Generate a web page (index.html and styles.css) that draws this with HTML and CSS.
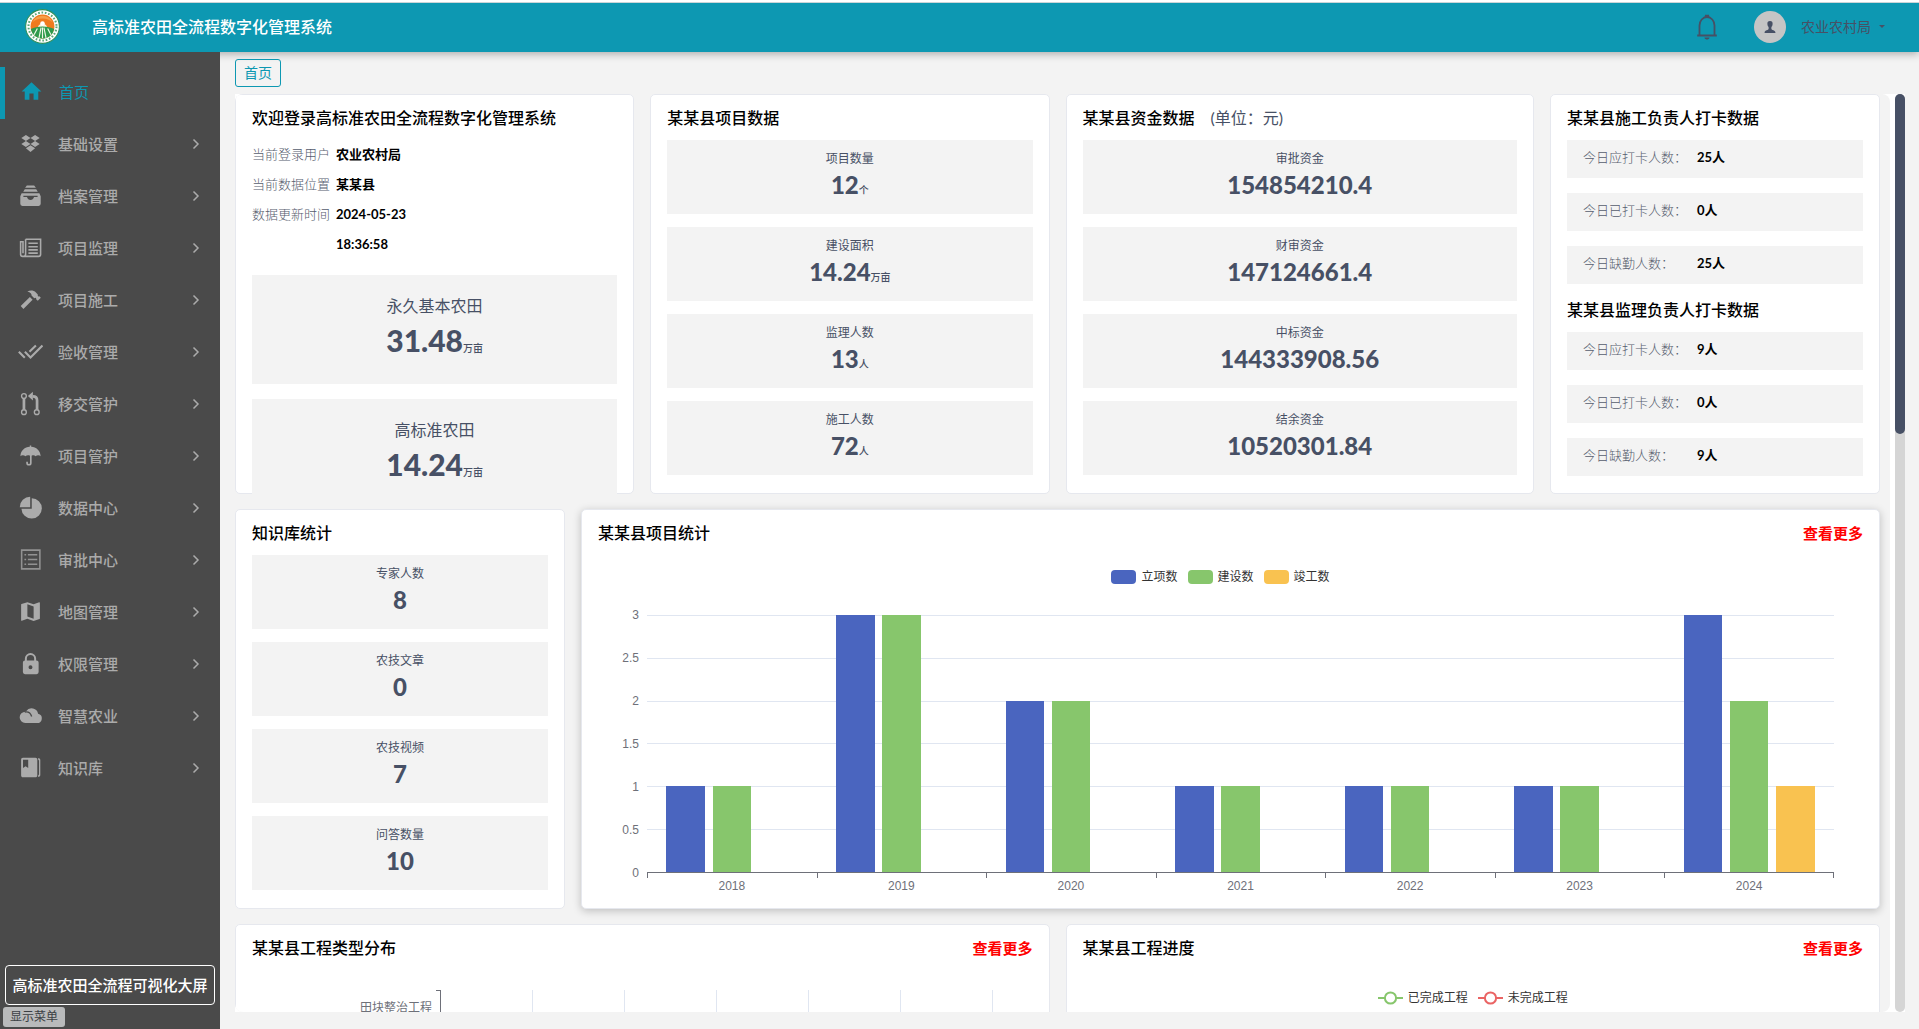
FILE: index.html
```
<!DOCTYPE html>
<html lang="zh-CN">
<head>
<meta charset="utf-8">
<title>高标准农田全流程数字化管理系统</title>
<link rel="stylesheet" href="styles.css">
</head>
<body>
<header class="topbar">
  <svg class="logo" viewBox="0 0 34 34" aria-hidden="true">
    <circle cx="17" cy="17" r="16.4" fill="#fff" stroke="#2f8f5a" stroke-width="1"/>
    <circle cx="17" cy="17" r="13.6" fill="none" stroke="#5aa777" stroke-width="2" stroke-dasharray="1.6 1.7"/>
    <circle cx="17" cy="17" r="11.6" fill="#f07a1d"/>
    <path d="M7 13a11 11 0 0 1 20 0c-5-5-15-5-20 0z" fill="#f6a04a"/>
    <path d="M12.5 18a4.6 4.6 0 0 1 9 0z" fill="#fff3dc"/>
    <circle cx="17" cy="14" r="2.2" fill="#fff"/>
    <path d="M5.6 19.5c6-3.4 16.800-3.400 22.800 0A11.600 11.600 0 0 1 5.600 19.500z" fill="#2f9a4c"/>
    <path d="M15.600 18.200 13.600 28M18.400 18.200 20.400 28M12 19 8.800 25M22 19l3.200 6M17 18v10.500" stroke="#f2f8e8" stroke-width="1.100"/>
  </svg>
  <h1 class="system-name">高标准农田全流程数字化管理系统</h1>
  <button class="icon-button" type="button" aria-label="通知">
    <svg width="24" height="28" viewBox="0 0 24 28" fill="none" stroke="#475065" stroke-width="1.800">
      <path d="M2.200 22.500h19.600M4.500 22.200V12.500a7.500 8.500 0 0 1 15 0v9.700"/>
      <path d="M10.500 4.200 10.800 2.600h2.400l.3 1.600z" fill="#475065"/>
      <path d="M9.800 25h4.400l-1.200 1h-2z" fill="#475065" stroke-width="1"/>
    </svg>
  </button>
  <button class="user" type="button">
    <span class="avatar">
      <svg width="12" height="12" viewBox="0 0 12 12"><path d="M6 0C7.900 0 8.800 1.200 8.600 3 8.500 4.600 8 5.500 7.400 6v2c.2 1 3.600 1.200 4 3.200V12H.6v-.8c.4-2 3.800-2.200 4-3.200V6C4 5.500 3.500 4.600 3.400 3 3.200 1.200 4.100 0 6 0z" fill="#475065"/></svg>
    </span>
    <span class="user-name">农业农村局</span>
    <span class="caret"></span>
  </button>
</header>
<div class="shell">
  <aside class="sidebar">
    <nav>
      <ul class="menu">
        <li><a class="menu-item active" href="#"><svg class="icon" viewBox="0 0 24 24"><path d="M10 20v-6h4v6h4.500v-8h3L12 3l-9.500 9h3v8z"/></svg><span>首页</span></a></li>
        <li><a class="menu-item" href="#"><svg class="icon" viewBox="0 0 24 24"><path d="M3.200 6.700 7.600 3.800 12 6.700 7.600 9.600zM12 6.700l4.400-2.900 4.400 2.900-4.400 2.900zM3.200 12.500l4.400-2.900 4.400 2.900-4.400 2.900zM12 12.500l4.400-2.900 4.400 2.900-4.400 2.900zM7.600 16.600l4.400-2.900 4.400 2.900-4.400 3.600z"/></svg><span>基础设置</span><svg class="chevron" viewBox="0 0 8 12"><path d="M1.500 1.500 6 6l-4.500 4.500"/></svg></a></li>
        <li><a class="menu-item" href="#"><svg class="icon" viewBox="0 0 24 24"><path d="M8.500 2.400h7l1.700 2.200H6.800zM6.500 5.900h11l1.500 2.600H5zM3.500 9.800h17l1.300 3V20a2 2 0 0 1-2 2H4.200a2 2 0 0 1-2-2v-7.200zM8.600 13.500c.6 2 1.700 2.800 3.400 2.800s2.800-.8 3.400-2.800h3.400v-1.200H5.200v1.200z" fill-rule="evenodd"/></svg><span>档案管理</span><svg class="chevron" viewBox="0 0 8 12"><path d="M1.500 1.500 6 6l-4.500 4.500"/></svg></a></li>
        <li><a class="menu-item" href="#"><svg class="icon line" viewBox="0 0 24 24"><path d="M7.300 4h14.400v14.500a2 2 0 0 1-2 2H4.500a2 2 0 0 1-2-2V6.500h2.300v11M7.300 4v14.500a2 2 0 0 1-2.500 2M10 8h9M10 11.300h9M10 14.300h9M10 17.400h9"/></svg><span>项目监理</span><svg class="chevron" viewBox="0 0 8 12"><path d="M1.500 1.500 6 6l-4.500 4.500"/></svg></a></li>
        <li><a class="menu-item" href="#"><svg class="icon" viewBox="0 0 24 24"><path d="M2.600 18.300 5.200 21 14 12.200l-2.600-2.500zM9 4.200c3-1.400 6.200-1 8.200 1L19 7.100c-.1 1 .1 1.700.6 2l.9-.3 1.400 1.500-2.900 3-1.600-1.500c.3-.8 0-1.200-.5-1.600l-1.300.6L13 8.200c.2-1.800-1-3.300-4-4z"/></svg><span>项目施工</span><svg class="chevron" viewBox="0 0 8 12"><path d="M1.500 1.500 6 6l-4.500 4.500"/></svg></a></li>
        <li><a class="menu-item" href="#"><svg class="icon check" viewBox="0 0 24 24"><path d="m.8 12.300 5.700 5.700M6.600 12.300l5.400 5.400L23.500 6.200M11 12.300l6.200-6.100"/></svg><span>验收管理</span><svg class="chevron" viewBox="0 0 8 12"><path d="M1.500 1.500 6 6l-4.500 4.500"/></svg></a></li>
        <li><a class="menu-item" href="#"><svg class="icon" viewBox="0 0 24 24"><g fill="none" stroke="currentColor"><g stroke-width="1.300"><circle cx="5.700" cy="4.800" r="2.300"/><circle cx="5.700" cy="20.300" r="2.300"/><circle cx="18" cy="20.300" r="2.300"/></g><path d="M5.700 7v11M18.300 18V9c0-2.600-1.300-3.900-4-3.900" stroke-width="2.600"/></g><path d="M14.300.8v8.200L9.500 4.900z"/></svg><span>移交管护</span><svg class="chevron" viewBox="0 0 8 12"><path d="M1.500 1.500 6 6l-4.500 4.500"/></svg></a></li>
        <li><a class="menu-item" href="#"><svg class="icon" viewBox="0 0 24 24"><path d="M2.300 12.700C2.600 7.300 6.500 4 11.300 3.700V2.500h1.400v1.200c4.800.3 8.700 3.600 9 9-1-1.100-3.500-1.100-4.800 0-1-1-2.400-1.200-3.800-.5v6.900a2.600 2.600 0 0 1-5.200 0v-1h1.600v1a1 1 0 0 0 2 0v-6.900c-1.500-.7-3.300-.5-4.400.5-1.300-1.100-3.800-1.100-4.800 0z"/></svg><span>项目管护</span><svg class="chevron" viewBox="0 0 8 12"><path d="M1.500 1.500 6 6l-4.500 4.500"/></svg></a></li>
        <li><a class="menu-item" href="#"><svg class="icon" viewBox="0 0 24 24"><path d="M13.200 3a9.800 9.800 0 1 1-9.900 10.200h9.900zM11.700 1.700v10H1.700a10 10 0 0 1 10-10z"/></svg><span>数据中心</span><svg class="chevron" viewBox="0 0 8 12"><path d="M1.500 1.500 6 6l-4.500 4.500"/></svg></a></li>
        <li><a class="menu-item" href="#"><svg class="icon line faint" viewBox="0 0 24 24"><path d="M3.500 3h17.500v18H3.500zM6.200 7.500h1.600M6.200 12h1.600M6.200 16.500h1.600M9.500 7.500h9M9.500 12h9M9.500 16.500h9"/></svg><span>审批中心</span><svg class="chevron" viewBox="0 0 8 12"><path d="M1.500 1.500 6 6l-4.500 4.500"/></svg></a></li>
        <li><a class="menu-item" href="#"><svg class="icon" viewBox="0 0 24 24"><path d="M20.500 3l-.16.03L15 5.100 9 3 3.360 4.900c-.21.07-.36.25-.36.48V20.500c0 .28.22.5.5.5l.16-.03L9 18.900l6 2.100 5.640-1.900c.21-.07.36-.25.36-.48V3.500c0-.28-.22-.5-.5-.5zM15 19l-6-2.110V5l6 2.110V19z"/></svg><span>地图管理</span><svg class="chevron" viewBox="0 0 8 12"><path d="M1.500 1.500 6 6l-4.500 4.500"/></svg></a></li>
        <li><a class="menu-item" href="#"><svg class="icon" viewBox="0 0 24 24"><path d="M6.600 9V7.300a5.400 5.400 0 0 1 10.800 0V9h.4a2 2 0 0 1 2 2v9.200a2 2 0 0 1-2 2H6.700a2 2 0 0 1-2-2V11a2 2 0 0 1 1.900-2zm1.900 0h7V7.300a3.500 3.500 0 0 0-7 0zM12 13.700a1.900 1.900 0 1 0 0 3.800 1.900 1.900 0 0 0 0-3.800z" fill-rule="evenodd"/></svg><span>权限管理</span><svg class="chevron" viewBox="0 0 8 12"><path d="M1.500 1.500 6 6l-4.500 4.500"/></svg></a></li>
        <li><a class="menu-item" href="#"><svg class="icon" viewBox="0 0 24 24"><path d="M7.200 8.300a5.500 5.500 0 0 0-.2 11h11.300a4.500 4.500 0 0 0 1-8.900A6.400 6.400 0 0 0 7.800 7.800z"/><path d="M6.500 8.700c3.400-.6 5.600.8 6.600 4.300" fill="none" stroke="#4a4a4a" stroke-width="1.300"/></svg><span>智慧农业</span><svg class="chevron" viewBox="0 0 8 12"><path d="M1.500 1.500 6 6l-4.500 4.500"/></svg></a></li>
        <li><a class="menu-item" href="#"><svg class="icon" viewBox="0 0 24 24"><path d="M4.700 2.700H16.800c1 0 1.700.7 1.700 1.700v15.200c0 1-.7 1.700-1.700 1.700H4.700c-1 0-1.700-.7-1.700-1.700V4.400c0-1 .7-1.700 1.700-1.700zM4.800 4.500v8l2.500-1.700 2.500 1.700v-8zM19.400 2.800c1.400.2 2 1 2 2v14.400c0 1-.6 1.800-2 2v-1.800l.8-.6V5.200l-.8-.6z" fill-rule="evenodd"/></svg><span>知识库</span><svg class="chevron" viewBox="0 0 8 12"><path d="M1.500 1.500 6 6l-4.500 4.500"/></svg></a></li>
      </ul>
    </nav>
    <div class="sidebar-foot">
      <button class="screen-button" type="button">高标准农田全流程可视化大屏</button>
      <button class="toggle-menu" type="button">显示菜单</button>
    </div>
  </aside>
  <main class="main">
    <div class="tabs"><button class="tab" type="button">首页</button></div>
    <div class="scroll">
      <div class="view">
        <div class="board">
          <section class="card span-6">
            <h2 class="card-title">欢迎登录高标准农田全流程数字化管理系统</h2>
            <dl class="info">
              <dt>当前登录用户</dt><dd>农业农村局</dd>
              <dt>当前数据位置</dt><dd>某某县</dd>
              <dt>数据更新时间</dt><dd>2024-05-23 18:36:58</dd>
            </dl>
            <div class="stats large">
              <div class="stat"><p>永久基本农田</p><strong>31.48<small>万亩</small></strong></div>
              <div class="stat"><p>高标准农田</p><strong>14.24<small>万亩</small></strong></div>
            </div>
          </section>
          <section class="card span-6">
            <h2 class="card-title">某某县项目数据</h2>
            <div class="stats">
              <div class="stat"><p>项目数量</p><strong>12<small>个</small></strong></div>
              <div class="stat"><p>建设面积</p><strong>14.24<small>万亩</small></strong></div>
              <div class="stat"><p>监理人数</p><strong>13<small>人</small></strong></div>
              <div class="stat"><p>施工人数</p><strong>72<small>人</small></strong></div>
            </div>
          </section>
          <section class="card span-7">
            <h2 class="card-title">某某县资金数据<span class="unit">(单位：元)</span></h2>
            <div class="stats">
              <div class="stat"><p>审批资金</p><strong>154854210.4</strong></div>
              <div class="stat"><p>财审资金</p><strong>147124661.4</strong></div>
              <div class="stat"><p>中标资金</p><strong>144333908.56</strong></div>
              <div class="stat"><p>结余资金</p><strong>10520301.84</strong></div>
            </div>
          </section>
          <section class="card span-5">
            <h2 class="card-title">某某县施工负责人打卡数据</h2>
            <dl class="checkins">
              <div><dt>今日应打卡人数：</dt><dd>25人</dd></div>
              <div><dt>今日已打卡人数：</dt><dd>0人</dd></div>
              <div><dt>今日缺勤人数：</dt><dd>25人</dd></div>
            </dl>
            <h2 class="card-title second">某某县监理负责人打卡数据</h2>
            <dl class="checkins">
              <div><dt>今日应打卡人数：</dt><dd>9人</dd></div>
              <div><dt>今日已打卡人数：</dt><dd>0人</dd></div>
              <div><dt>今日缺勤人数：</dt><dd>9人</dd></div>
            </dl>
          </section>

          <section class="card span-5">
            <h2 class="card-title">知识库统计</h2>
            <div class="stats">
              <div class="stat"><p>专家人数</p><strong>8</strong></div>
              <div class="stat"><p>农技文章</p><strong>0</strong></div>
              <div class="stat"><p>农技视频</p><strong>7</strong></div>
              <div class="stat"><p>问答数量</p><strong>10</strong></div>
            </div>
          </section>
          <section class="card raised span-19">
            <div class="card-head"><h2 class="card-title">某某县项目统计</h2><a class="more" href="#">查看更多</a></div>
            <ul class="legend totals">
              <li><i class="swatch blue"></i>立项数</li>
              <li><i class="swatch green"></i>建设数</li>
              <li><i class="swatch yellow"></i>竣工数</li>
            </ul>
            <div class="chart">
              <div class="y-axis"><span>3</span><span>2.5</span><span>2</span><span>1.5</span><span>1</span><span>0.5</span><span>0</span></div>
              <div class="plot">
                <div class="lines"><i></i><i></i><i></i><i></i><i></i><i></i><i></i></div>
                <div class="groups">
                  <div class="group"><i class="blue" style="height:33.33%"></i><i class="green" style="height:33.33%"></i><i class="yellow" style="height:0"></i></div>
                  <div class="group"><i class="blue" style="height:100%"></i><i class="green" style="height:100%"></i><i class="yellow" style="height:0"></i></div>
                  <div class="group"><i class="blue" style="height:66.67%"></i><i class="green" style="height:66.67%"></i><i class="yellow" style="height:0"></i></div>
                  <div class="group"><i class="blue" style="height:33.33%"></i><i class="green" style="height:33.33%"></i><i class="yellow" style="height:0"></i></div>
                  <div class="group"><i class="blue" style="height:33.33%"></i><i class="green" style="height:33.33%"></i><i class="yellow" style="height:0"></i></div>
                  <div class="group"><i class="blue" style="height:33.33%"></i><i class="green" style="height:33.33%"></i><i class="yellow" style="height:0"></i></div>
                  <div class="group"><i class="blue" style="height:100%"></i><i class="green" style="height:66.67%"></i><i class="yellow" style="height:33.33%"></i></div>
                </div>
              </div>
              <div class="x-axis"><span>2018</span><span>2019</span><span>2020</span><span>2021</span><span>2022</span><span>2023</span><span>2024</span></div>
            </div>
          </section>

          <section class="card span-12">
            <div class="card-head"><h2 class="card-title">某某县工程类型分布</h2><a class="more" href="#">查看更多</a></div>
            <div class="type-chart">
              <span class="type-label">田块整治工程</span>
              <i class="tick"></i>
              <div class="type-plot"><i></i><i></i><i></i><i></i><i></i><i></i></div>
            </div>
          </section>
          <section class="card span-12">
            <div class="card-head"><h2 class="card-title">某某县工程进度</h2><a class="more" href="#">查看更多</a></div>
            <ul class="legend progress">
              <li><svg width="25" height="14" viewBox="0 0 25 14" fill="#fff" stroke="#87c66c" stroke-width="2"><path d="M0 7h25"/><circle cx="12.500" cy="7" r="5.600"/></svg>已完成工程</li>
              <li><svg width="25" height="14" viewBox="0 0 25 14" fill="#fff" stroke="#ea6464" stroke-width="2"><path d="M0 7h25"/><circle cx="12.500" cy="7" r="5.600"/></svg>未完成工程</li>
            </ul>
          </section>
        </div>
      </div>
      <div class="scrollbar"><i class="thumb"></i></div>
    </div>
  </main>
</div>
</body>
</html>
```
FILE: styles.css
```
* {
  box-sizing: border-box;
  margin: 0;
  padding: 0;
}

body {
  display: flex;
  flex-direction: column;
  height: 100vh;
  border-top: 2px solid #fff;
  overflow: hidden;
  background: #f3f3f3;
  color: #475065;
  font-family: Lato, "Noto Sans CJK SC", sans-serif;
  font-size: 14px;
}

ul {
  list-style: none;
}

a {
  color: inherit;
  text-decoration: none;
}

button {
  border: 0;
  background: none;
  color: inherit;
  font: inherit;
  cursor: pointer;
}

/* Top bar */
.topbar {
  display: flex;
  align-items: center;
  flex: none;
  height: 50px;
  padding: 0 34px 2px 25px;
  border-top: 1px solid #cbd5d8;
  background: #0d98b2;
  box-shadow: 0 2px 8px rgba(0, 0, 0, 0.3);
}

.logo {
  width: 35px;
  height: 35px;
  margin-right: 32px;
}

.system-name {
  color: #fff;
  font-size: 16px;
  font-weight: 500;
  line-height: 24px;
}

.icon-button {
  height: 28px;
  margin-left: auto;
}

.user {
  display: flex;
  align-items: center;
  margin-left: 35px;
  line-height: 20px;
}

.avatar {
  display: grid;
  place-items: center;
  width: 32px;
  height: 32px;
  margin-right: 15px;
  border-radius: 50%;
  background: #c5c5c5;
}

.caret {
  margin-left: 8px;
  border: 3px solid transparent;
  border-top-color: #475065;
  border-bottom: 0;
}

/* Sidebar */
.shell {
  display: flex;
  flex: 1;
  min-height: 0;
}

.sidebar {
  position: relative;
  display: flex;
  flex-direction: column;
  flex: none;
  width: 220px;
  padding-top: 15px;
  background: #4a4a4a;
}

.menu-item {
  display: flex;
  align-items: center;
  height: 52px;
  padding: 0 20px 3px 18px;
  border-radius: 0 5px 5px 0;
  color: #ababab;
  font-size: 15px;
  font-weight: 500;
}

.menu-item.active {
  padding-left: 19px;
  background: linear-gradient(#0d98b2, #0d98b2) 0 0 / 5px 100% no-repeat;
  color: #0d98b2;
  font-weight: 400;
}

.icon {
  width: 25px;
  height: 25px;
  margin-right: 15px;
  fill: currentColor;
}

.icon.line,
.icon.check,
.chevron {
  fill: none;
  stroke: currentColor;
  stroke-width: 1.5;
}

.icon.check {
  stroke-width: 2;
}

.icon.faint {
  opacity: 0.75;
}

.chevron {
  width: 8px;
  height: 12px;
  margin-left: auto;
}

.sidebar-foot {
  display: flex;
  flex-direction: column;
  align-items: flex-start;
  gap: 2px;
  margin-top: auto;
  padding: 0 5px 2px 3px;
}

.screen-button {
  align-self: stretch;
  height: 40px;
  margin-left: 2px;
  padding-bottom: 2px;
  border: 1px solid #fff;
  border-radius: 4px;
  color: #fff;
  font-size: 15px;
  font-weight: 500;
  white-space: nowrap;
}

.toggle-menu {
  height: 20px;
  padding: 0 7px;
  border-radius: 3px;
  background: #b9babb;
  color: #3c3f44;
  font-size: 12px;
  line-height: 20px;
}

/* Main area */
.main {
  display: flex;
  flex-direction: column;
  flex: 1;
  min-width: 0;
  padding: 7px 14px 17px 15px;
}

.tabs {
  display: flex;
  margin-bottom: 7px;
}

.tab {
  height: 28px;
  padding: 0 8px 2px;
  border: 1px solid #0d98b2;
  border-radius: 3px;
  color: #0d98b2;
}

.scroll {
  display: flex;
  flex: 1;
  min-height: 0;
  background: #fff;
}

.view {
  flex: 1;
  min-width: 0;
  margin-right: 5px;
  padding-right: 10px;
  overflow: hidden;
  border-radius: 8px;
  background: #f3f3f3;
}

.scrollbar {
  width: 10px;
  border-radius: 5px;
  background: #d5d5d5;
}

.thumb {
  display: block;
  height: 37%;
  border-radius: 5px;
  background: #475065;
}

.board {
  display: grid;
  grid-template-columns: repeat(24, minmax(0, 1fr));
  grid-auto-rows: 400px;
  gap: 15px 16px;
}

.span-5 { grid-column: span 5; }
.span-6 { grid-column: span 6; }
.span-7 { grid-column: span 7; }
.span-12 { grid-column: span 12; }
.span-19 { grid-column: span 19; }

.card {
  padding: 11px 16px 0;
  border: 1px solid #e6e8ee;
  border-radius: 5px;
  background: #fff;
}

.card.raised {
  box-shadow: 0 2px 8px rgba(0, 0, 0, 0.22);
}

.card-head {
  display: flex;
  justify-content: space-between;
}

.card-title {
  margin-bottom: 10px;
  color: #000;
  font-size: 16px;
  font-weight: 500;
  line-height: 24px;
}

.card-title.second {
  margin-top: 14px;
}

.unit {
  margin-left: 16px;
  color: #475065;
  font-weight: 400;
}

.more {
  color: #f00;
  font-size: 15px;
  font-weight: 700;
  line-height: 24px;
}

/* Account details */
.info {
  display: grid;
  grid-template-columns: 78px 80px;
  column-gap: 6px;
  margin: -1px 0 16px;
  font-size: 13px;
  line-height: 30px;
}

.info dt,
.checkins dt {
  color: #565d6e;
  font-weight: 300;
}

.info dd,
.checkins dd {
  color: #000;
  font-weight: 700;
}

/* Figure tiles */
.stats {
  display: grid;
  gap: 13px;
}

.stat {
  height: 74px;
  padding-top: 9px;
  background: #f3f3f3;
  text-align: center;
}

.stat p {
  font-size: 12px;
  line-height: 20px;
}

.stat strong {
  display: block;
  font-size: 24px;
  font-weight: 900;
  line-height: 32px;
}

.stat small {
  font-size: 10px;
  font-weight: 500;
}

.stats.large {
  gap: 15px;
}

.large .stat {
  height: 109px;
  padding-top: 19px;
}

.large p {
  font-size: 16px;
  line-height: 24px;
}

.large strong {
  font-size: 30px;
  line-height: 44px;
}

/* Attendance rows */
.checkins {
  display: grid;
  gap: 15px;
}

.checkins div {
  display: grid;
  grid-template-columns: 104px 1fr;
  column-gap: 10px;
  height: 38px;
  padding: 0 16px;
  background: #f3f3f3;
  font-size: 13px;
  line-height: 35px;
}

/* Bar chart */
.legend {
  display: flex;
  justify-content: center;
  gap: 10px;
  color: #333;
  font-size: 12px;
  line-height: 18px;
}

.legend.totals {
  padding: 13px 20px 0 0;
}

.legend.progress {
  padding-top: 19px;
}

.legend li {
  display: flex;
  align-items: center;
  gap: 5px;
}

.swatch {
  width: 25px;
  height: 14px;
  border-radius: 4px;
}

.blue { background: #4a65bf; }
.green { background: #87c66c; }
.yellow { background: #f9c250; }

.chart {
  display: grid;
  grid-template-columns: 41px 1fr;
  grid-template-rows: 258px auto;
  column-gap: 8px;
  margin-top: 29px;
  padding-right: 29px;
  color: #6e7079;
  font-family: "Liberation Sans", sans-serif;
  font-size: 12px;
  line-height: 18px;
}

.y-axis {
  display: flex;
  flex-direction: column;
  justify-content: space-between;
  margin: -9px 0;
  text-align: right;
}

.plot {
  display: grid;
}

.lines,
.groups {
  grid-area: 1 / 1;
  display: flex;
}

.lines {
  flex-direction: column;
  justify-content: space-between;
}

.lines i {
  height: 1px;
  background: #e0e6f1;
}

.groups {
  border-bottom: 1px solid #6e7079;
}

.group {
  display: flex;
  flex: 1;
  align-items: flex-end;
  justify-content: center;
  gap: 4.5%;
}

.group i {
  width: 22.7%;
}

.x-axis {
  grid-column: 2;
  display: flex;
  text-align: center;
}

.x-axis span {
  flex: 1;
  padding-top: 4px;
  background: linear-gradient(#6e7079, #6e7079) 0 0 / 1px 5px no-repeat;
}

.x-axis span:last-child {
  background: linear-gradient(#6e7079, #6e7079) 0 0 / 1px 5px no-repeat, linear-gradient(#6e7079, #6e7079) 100% 0 / 1px 5px no-repeat;
}

/* Project type chart */
.type-chart {
  display: grid;
  grid-template-columns: 180px 4px 1fr;
  column-gap: 4px;
  height: 320px;
  margin-top: 20px;
  padding-right: 40px;
}

.type-label {
  padding-top: 9px;
  color: #6e7079;
  font-size: 12px;
  line-height: 18px;
  text-align: right;
}

.tick {
  height: 1px;
  background: #6e7079;
}

.type-plot {
  display: flex;
  margin-left: -4px;
  border-left: 1px solid #6e7079;
}

.type-plot i {
  flex: 1;
  border-right: 1px solid #e0e6f1;
}
```
